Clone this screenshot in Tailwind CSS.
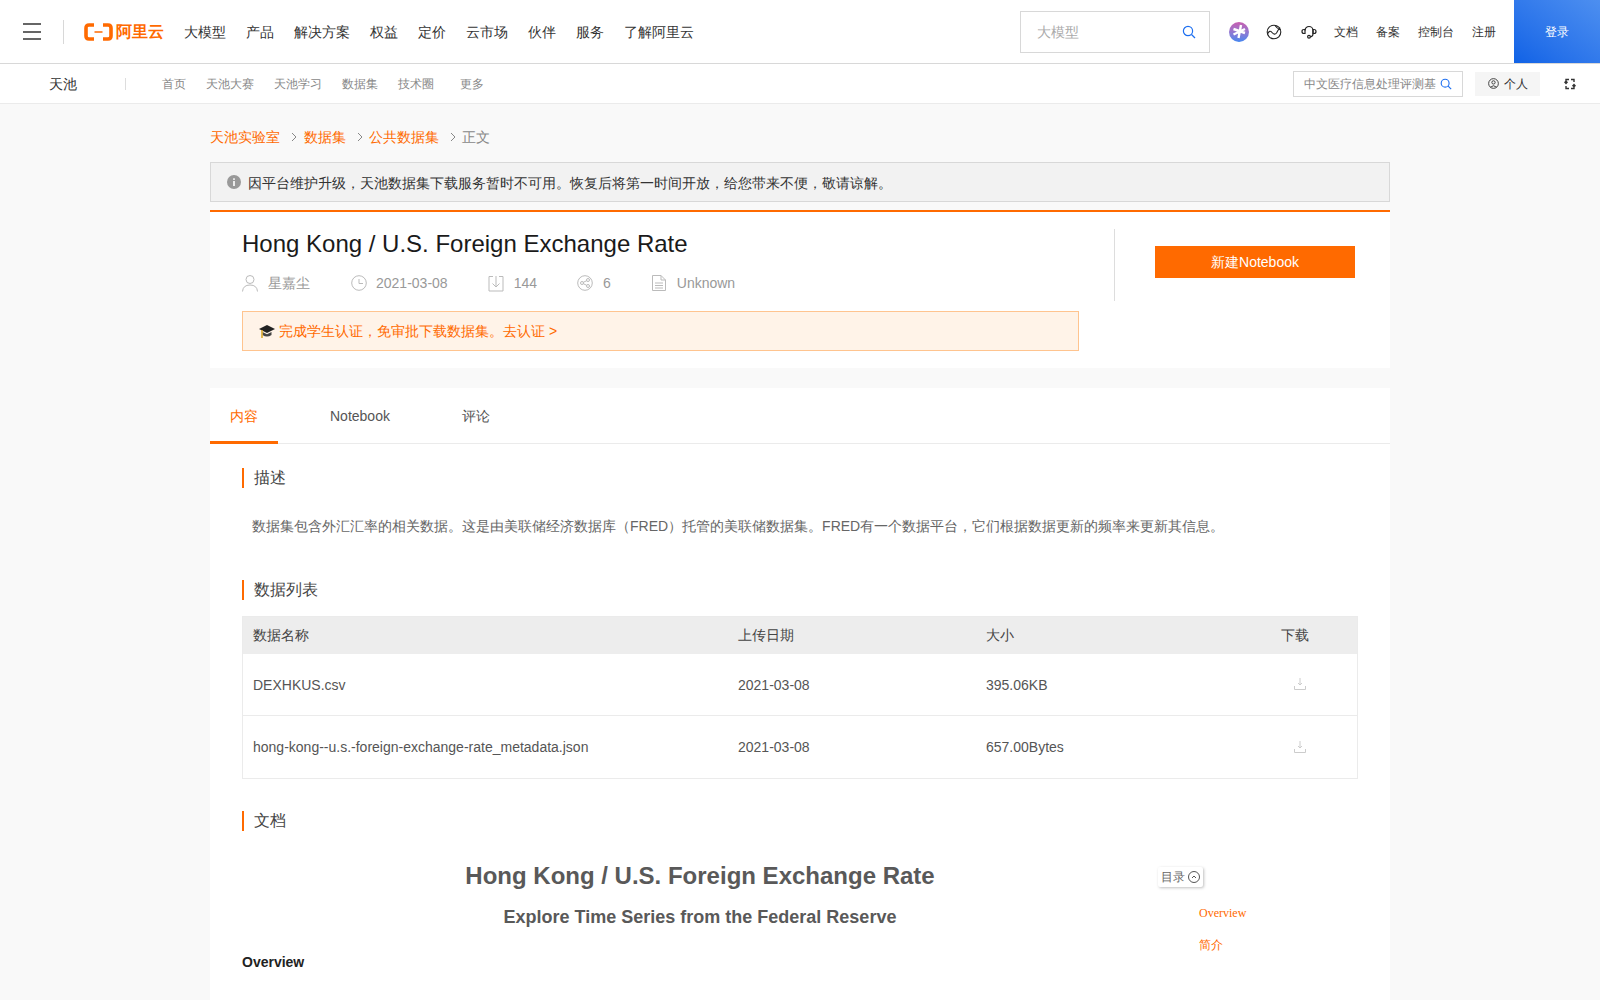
<!DOCTYPE html>
<html lang="en">
<head>
<meta charset="utf-8">
<title>Hong Kong / U.S. Foreign Exchange Rate</title>
<script src="https://cdn.jsdelivr.net/npm/@tailwindcss/browser@4"></script>
</head>
<body class="font-['Liberation_Sans','Open_Sans',sans-serif] bg-[#f9f9f9] text-[#333] h-[1000px] overflow-hidden">

<!-- top bar -->
<header class="h-[64px] bg-white border-b border-[#d8d8d8] flex items-center text-[14px] text-[#333]">
  <div class="w-[64px] h-[24px] pl-[23px] border-r border-[#d8d8d8] flex items-center">
    <div class="w-[18px] flex flex-col gap-[5.5px]">
      <div class="h-[2px] bg-[#666]"></div><div class="h-[2px] bg-[#666]"></div><div class="h-[2px] bg-[#666]"></div>
    </div>
  </div>
  <div class="ml-[20px] w-[100px] flex items-center text-[#ff6a00]">
    <svg width="29" height="18" viewBox="0 0 29 18" fill="none" stroke="#ff6a00" stroke-width="3.6"><path d="M10 2H5Q2 2 2 5V13Q2 16 5 16H10M19 2H24Q27 2 27 5V13Q27 16 24 16H19"/><path d="M10.500 9H18.500" stroke-width="1.5"/></svg>
    <span class="ml-[3px] text-[16px] leading-[18px] font-bold">阿里云</span>
  </div>
  <nav class="flex gap-[20px] pt-[2px]">
    <a>大模型</a><a>产品</a><a>解决方案</a><a>权益</a><a>定价</a><a>云市场</a><a>伙伴</a><a>服务</a><a>了解阿里云</a>
  </nav>
  <div class="ml-auto w-[190px] h-[42px] border border-[#d8d8d8] flex items-center pl-[16px] pr-[13px] justify-between text-[#aaa]">
    <span class="pt-[2px]">大模型</span>
    <svg width="14" height="14" viewBox="0 0 14 14" fill="none" stroke="#1d6ff0" stroke-width="1.2"><circle cx="6" cy="6" r="4.6"/><path d="M9.5 9.5L13 13"/></svg>
  </div>
  <div class="ml-[19px] w-[20px] h-[20px] rounded-full bg-gradient-to-b from-[#c75db0] to-[#3f86f0] flex items-center justify-center">
    <svg width="15" height="15" viewBox="0 0 15 15" stroke="#fff" stroke-width="2.4" fill="none"><path d="M9 1L6.500 14M1.500 5L13 9M1.500 10.500L13 5"/></svg>
  </div>
  <svg class="ml-[17px]" width="16" height="16" viewBox="0 0 16 16" fill="none" stroke="#222" stroke-width="1.1"><circle cx="8" cy="8" r="6.800"/><path d="M1.500 10Q3.500 5.500 6 8.500T10.500 9Q12 6 14 3.500"/><path d="M9 1.500Q10.500 4 14.500 6"/></svg>
  <svg class="ml-[19px]" width="16" height="16" viewBox="0 0 16 16" fill="none" stroke="#222" stroke-width="1.2"><path d="M4 6.500A4 4 0 0 1 12 6.500V10Q12 12.500 9.500 12.800"/><path d="M4 5.500H3Q1 5.500 1 7.500T3 9.500H4ZM12 5.500H13Q15 5.500 15 7.500T13 9.500H12Z"/><circle cx="8" cy="12.800" r="1.400"/></svg>
  <div class="ml-[17px] flex gap-[18px] text-[12px]">
    <a>文档</a><a>备案</a><a>控制台</a><a>注册</a>
  </div>
  <div class="ml-[18px] w-[86px] h-[63px] bg-gradient-to-bl from-[#4d8ff0] to-[#0f62e6] text-white text-[12px] flex items-center justify-center">登录</div>
</header>

<!-- tianchi sub nav -->
<div class="h-[40px] bg-white border-b border-[#ebebeb] flex items-center text-[12px] text-[#888]">
  <span class="ml-[49px] w-[76px] text-[14px] text-[#333] pt-[2px]">天池</span>
  <div class="w-px h-[12px] bg-[#ddd]"></div>
  <span class="ml-[36px]">首页</span>
  <span class="ml-[20px]">天池大赛</span>
  <span class="ml-[20px]">天池学习</span>
  <span class="ml-[20px]">数据集</span>
  <span class="ml-[20px]">技术圈</span>
  <span class="ml-[26px]">更多</span>
  <div class="ml-auto w-[170px] h-[26px] border border-[#d8d8d8] flex items-center pl-[10px] pr-[10px] justify-between">
    <span class="whitespace-nowrap">中文医疗信息处理评测基</span>
    <svg width="12" height="12" viewBox="0 0 14 14" fill="none" stroke="#1d6ff0" stroke-width="1.3"><circle cx="6" cy="6" r="4.6"/><path d="M9.5 9.5L13 13"/></svg>
  </div>
  <div class="ml-[12px] w-[65px] h-[24px] bg-[#f5f5f5] text-[#333] flex items-center justify-center gap-[5px]">
    <svg width="11" height="11" viewBox="0 0 12 12" fill="none" stroke="#333"><circle cx="6" cy="6" r="5.3"/><circle cx="6" cy="4.8" r="1.8"/><path d="M2.8 10Q6 6.8 9.2 10"/></svg>
    <span>个人</span>
  </div>
  <svg class="ml-[24px] mr-[24px]" width="12" height="12" viewBox="0 0 12 12" fill="none" stroke="#333" stroke-width="1.4"><path d="M5 1.500H2V5M0.500 3.800L2 5.500L3.500 3.800M7 10.500H10V7M8.500 8.200L10 6.500L11.500 8.200"/><path d="M7 1.500H10V4M5 10.500H2V8"/></svg>
</div>

<main class="w-[1180px] mx-auto">
  <!-- breadcrumb -->
  <div class="h-[58px] pt-[8px] flex items-center text-[14px] text-[#ff6a00]">
    <span>天池实验室</span>
    <svg class="ml-[11px] mr-[6.5px]" width="6" height="10" viewBox="0 0 6 10" fill="none" stroke="#888"><path d="M1 1L5 5L1 9"/></svg>
    <span>数据集</span>
    <svg class="ml-[11px] mr-[6.5px]" width="6" height="10" viewBox="0 0 6 10" fill="none" stroke="#888"><path d="M1 1L5 5L1 9"/></svg>
    <span>公共数据集</span>
    <svg class="ml-[11px] mr-[6px]" width="6" height="10" viewBox="0 0 6 10" fill="none" stroke="#888"><path d="M1 1L5 5L1 9"/></svg>
    <span class="text-[#888]">正文</span>
  </div>

  <!-- notice -->
  <div class="h-[40px] border border-[#d8d8d8] bg-[#f2f2f2] flex items-center pl-[16px] text-[14px] text-[#333] gap-[7px]">
    <svg width="14" height="14" viewBox="0 0 14 14"><circle cx="7" cy="7" r="7" fill="#999"/><rect x="6.2" y="6" width="1.6" height="5" fill="#fff"/><rect x="6.2" y="3.3" width="1.6" height="1.6" fill="#fff"/></svg>
    <span class="pt-[2px]">因平台维护升级，天池数据集下载服务暂时不可用。恢复后将第一时间开放，给您带来不便，敬请谅解。</span>
  </div>

  <!-- dataset head -->
  <section class="mt-[8px] h-[158px] bg-white border-t-2 border-[#ff6a00] flex pl-[32px]">
    <div class="w-[837px]">
      <h1 class="mt-[16px] text-[24px] leading-[32px] text-[#1a1a1a]">Hong Kong / U.S. Foreign Exchange Rate</h1>
      <div class="mt-[11px] h-[24px] flex items-center text-[14px] text-[#999]">
        <svg width="16" height="18" viewBox="0 0 16 18" fill="none" stroke="#bbb"><circle cx="8" cy="5.5" r="4"/><path d="M.5 17.5Q1 11 8 11T15.500 17.5"/></svg>
        <span class="ml-[10px]">星嘉尘</span>
        <svg class="ml-[41px]" width="16" height="16" viewBox="0 0 16 16" fill="none" stroke="#bbb"><circle cx="8" cy="8" r="7.300"/><path d="M8 4V8.500H12"/></svg>
        <span class="ml-[9px]">2021-03-08</span>
        <svg class="ml-[40px]" width="16" height="17" viewBox="0 0 16 17" fill="none" stroke="#bbb"><path d="M5 1.500H1V16H15V1.500H11M8 1V12M4.500 8.500L8 12L11.500 8.500"/></svg>
        <span class="ml-[10px]">144</span>
        <svg class="ml-[40px]" width="16" height="16" viewBox="0 0 16 16" fill="none" stroke="#bbb"><circle cx="8" cy="8" r="7.300"/><circle cx="5" cy="8" r="1.500"/><circle cx="11" cy="5" r="1.500"/><circle cx="11" cy="11" r="1.500"/><path d="M6.300 7.300L9.700 5.700M6.300 8.700L9.700 10.300"/></svg>
        <span class="ml-[10px]">6</span>
        <svg class="ml-[41px]" width="14" height="16" viewBox="0 0 14 16" fill="none" stroke="#bbb"><path d="M.5.500H9L13.500 5V15.500H.5ZM9 .5V5H13.500M3 8H11M3 10.500H11M3 13H11"/></svg>
        <span class="ml-[11px]">Unknown</span>
      </div>
      <div class="mt-[16px] h-[40px] border border-[#ffc48f] bg-[#fff3e8] flex items-center pl-[16px] text-[14px] text-[#ff6a00] gap-[4px]">
        <svg width="16" height="15" viewBox="0 0 16 15"><path d="M8 1L16 5L8 9L0 5Z" fill="#222"/><path d="M3.500 8V11Q8 14 12.500 11V8L8 10.300Z" fill="#444"/><path d="M3 6V14" stroke="#d9a521" stroke-width="1.500"/></svg>
        <span>完成学生认证，免审批下载数据集。去认证 &gt;</span>
      </div>
    </div>
    <div class="ml-[35px] mt-[17px] h-[72px] border-l border-[#ddd] pl-[40px] pt-[17px]">
      <button class="w-[200px] h-[32px] bg-[#ff6a00] text-white text-[14px]">新建Notebook</button>
    </div>
  </section>

  <!-- tabs -->
  <section class="mt-[20px] bg-white pb-[40px]">
    <div class="h-[56px] border-b border-[#ebebeb] flex text-[14px] text-[#555]">
      <div class="w-[68px] h-[56px] border-b-[3px] border-[#ff6a00] text-[#ff6a00] flex items-center justify-center pt-[4px]">内容</div>
      <div class="ml-[52px] w-[60px] flex items-center pt-[2px]">Notebook</div>
      <div class="ml-[72px] flex items-center pt-[2px]">评论</div>
    </div>

    <div class="pl-[32px] pr-[32px]">
      <h3 class="mt-[24px] h-[20px] border-l-2 border-[#ff6a00] pl-[10px] text-[16px] leading-[20px] text-[#444]">描述</h3>
      <p class="mt-[28px] pl-[10px] text-[14px] leading-[20px] text-[#666]">数据集包含外汇汇率的相关数据。这是由美联储经济数据库（FRED）托管的美联储数据集。FRED有一个数据平台，它们根据数据更新的频率来更新其信息。</p>

      <h3 class="mt-[44px] h-[20px] border-l-2 border-[#ff6a00] pl-[10px] text-[16px] leading-[20px] text-[#444]">数据列表</h3>
      <div class="mt-[16px] w-[1116px] border border-[#ebebeb] text-[14px] text-[#555]">
        <div class="h-[37px] bg-[#ededed] flex items-center pl-[10px] text-[#444]">
          <span class="w-[485px]">数据名称</span><span class="w-[248px]">上传日期</span><span class="w-[295px]">大小</span><span>下载</span>
        </div>
        <div class="h-[62px] border-b border-[#ebebeb] flex items-center pl-[10px] pt-[1px]">
          <span class="w-[485px]">DEXHKUS.csv</span><span class="w-[248px]">2021-03-08</span><span class="w-[308px]">395.06KB</span>
          <svg class="-mt-[3px]" width="12" height="12" viewBox="0 0 12 12" fill="none" stroke="#ccc"><path d="M6 0V7M4 5L6 7L8 5M.5 8V11.500H11.500V8"/></svg>
        </div>
        <div class="h-[62px] flex items-center pl-[10px]">
          <span class="w-[485px]">hong-kong--u.s.-foreign-exchange-rate_metadata.json</span><span class="w-[248px]">2021-03-08</span><span class="w-[308px]">657.00Bytes</span>
          <svg width="12" height="12" viewBox="0 0 12 12" fill="none" stroke="#ccc"><path d="M6 0V7M4 5L6 7L8 5M.5 8V11.500H11.500V8"/></svg>
        </div>
      </div>

      <h3 class="mt-[32px] h-[20px] border-l-2 border-[#ff6a00] pl-[10px] text-[16px] leading-[20px] text-[#444]">文档</h3>

      <div class="mt-[24px] flex">
        <div class="w-[916px]">
          <h1 class="mt-[4px] text-center text-[24px] leading-[34px] font-bold text-[#595959]">Hong Kong / U.S. Foreign Exchange Rate</h1>
          <h2 class="mt-[11px] text-center text-[18px] leading-[26px] font-bold text-[#595959]">Explore Time Series from the Federal Reserve</h2>
          <p class="mt-[22px] text-[14px] leading-[20px] font-bold text-[#222]">Overview</p>
        </div>
        <div class="text-[12px] font-['Liberation_Serif',serif] text-[#ff6a00]">
          <div class="mt-[12px] w-[45px] h-[20px] bg-white shadow-[1px_1px_3px_rgba(0,0,0,0.25)] rounded-[2px] flex items-center pl-[3px] gap-[3px] text-[#666] font-['Liberation_Sans',sans-serif]">
            <span>目录</span>
            <svg width="12" height="12" viewBox="0 0 12 12" fill="none" stroke="#555"><circle cx="6" cy="6" r="5.500"/><path d="M4 7L6 5L8 7"/></svg>
          </div>
          <p class="mt-[18px] ml-[41px] leading-[16px]">Overview</p>
          <p class="mt-[16px] ml-[41px] leading-[16px]">简介</p>
        </div>
      </div>
    </div>
  </section>
</main>
</body>
</html>
